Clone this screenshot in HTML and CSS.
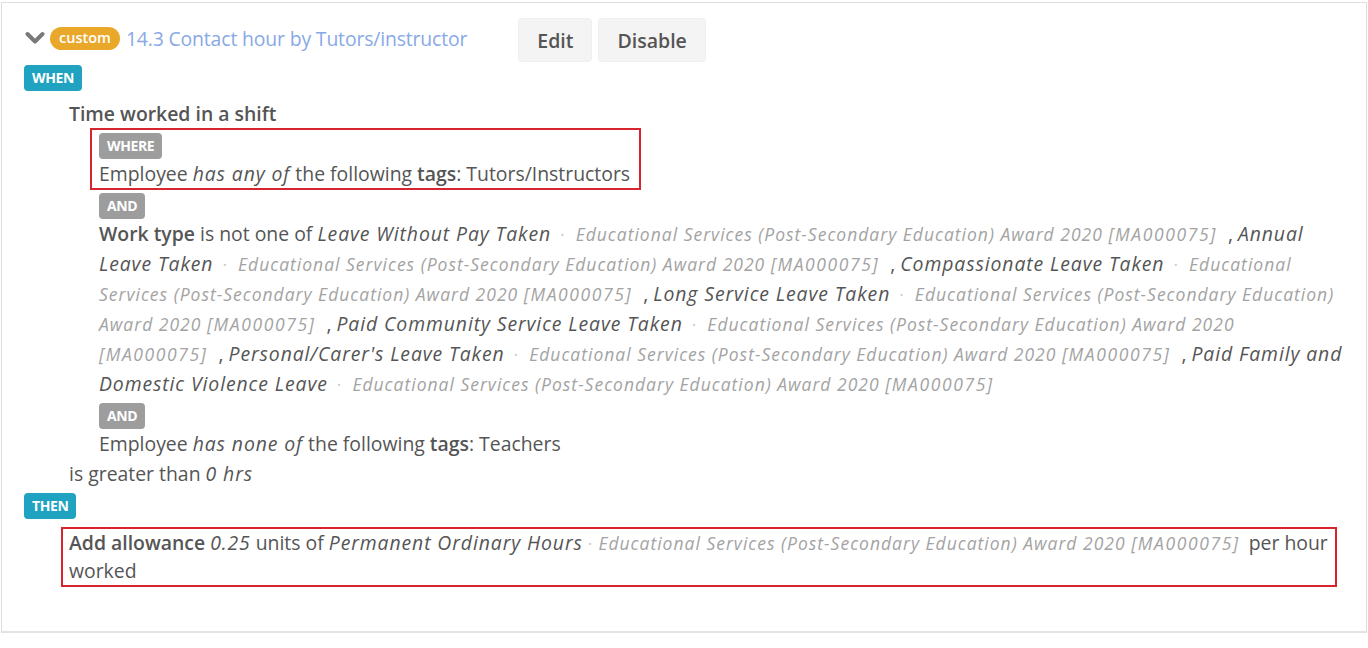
FILE: index.html
```html
<!DOCTYPE html>
<html>
<head>
<meta charset="utf-8">
<link rel="stylesheet" href="styles.css">
</head>
<body>
<div class="card">
  <div class="header">
    <div class="title-wrap">
      <svg class="chevron" width="20" height="14" viewBox="0 0 20 14"><path d="M2.5 3 L10 10.5 L17.5 3" fill="none" stroke="#7a7a7a" stroke-width="4" stroke-linecap="round" stroke-linejoin="round"/></svg>
      <span class="pill">custom</span>
      <span class="title">14.3 Contact hour by Tutors/instructor</span>
    </div>
    <div class="actions">
      <button class="btn">Edit</button>
      <button class="btn">Disable</button>
    </div>
  </div>

  <div class="section when">
    <span class="badge teal">WHEN</span>
    <div class="when-body">
      <div class="line strong">Time worked in a shift</div>
      <div class="conds">
        <div class="hl hl-where">
          <span class="badge gray first">WHERE</span>
          <div class="line">Employee <em>has any of</em> the following <b>tags</b>: Tutors/Instructors</div>
        </div>
        <span class="badge gray after-box">AND</span>
        <div class="line"><b>Work type</b> is not one of <em>Leave Without Pay Taken</em><span class="award"><span class="dot">·</span>Educational Services (Post-Secondary Education) Award 2020 <span class="code">[MA000075]</span></span>, <em>Annual Leave Taken</em><span class="award"><span class="dot">·</span>Educational Services (Post-Secondary Education) Award 2020 <span class="code">[MA000075]</span></span>, <em>Compassionate Leave Taken</em><span class="award"><span class="dot">·</span>Educational Services (Post-Secondary Education) Award 2020 <span class="code">[MA000075]</span></span>, <em>Long Service Leave Taken</em><span class="award"><span class="dot">·</span>Educational Services (Post-Secondary Education) Award 2020 <span class="code">[MA000075]</span></span>, <em>Paid Community Service Leave Taken</em><span class="award"><span class="dot">·</span>Educational Services (Post-Secondary Education) Award 2020 <span class="code">[MA000075]</span></span>, <em>Personal/Carer's Leave Taken</em><span class="award"><span class="dot">·</span>Educational Services (Post-Secondary Education) Award 2020 <span class="code">[MA000075]</span></span>, <em>Paid Family and Domestic Violence Leave</em><span class="award"><span class="dot">·</span>Educational Services (Post-Secondary Education) Award 2020 <span class="code">[MA000075]</span></span></div>
        <span class="badge gray">AND</span>
        <div class="line">Employee <em>has none of</em> the following <b>tags</b>: Teachers</div>
      </div>
      <div class="line">is greater than <em>0 hrs</em></div>
    </div>
  </div>

  <div class="section then">
    <span class="badge teal">THEN</span>
    <div class="then-body">
      <div class="hl hl-then">
        <div class="line tight"><b>Add allowance</b> <em>0.25</em> units of <em>Permanent Ordinary Hours</em><span class="award small"><span class="dot">·</span>Educational Services (Post-Secondary Education) Award 2020 <span class="code">[MA000075]</span></span> per hour worked</div>
      </div>
    </div>
  </div>
</div>
</body>
</html>
```

FILE: styles.css
```css
* { box-sizing: border-box; }
html, body { margin: 0; padding: 0; background: #fff; }
body {
  font-family: "Open Sans", "Lato", sans-serif;
  color: #555;
  font-size: 19.4px;
}
.card {
  margin: 2px 1px 0 1px;
  height: 631px;
  border: 1px solid #dedede;
  border-bottom: 2px solid #e3e3e3;
  padding: 15px 16px 0 22px;
}
.header {
  display: flex;
  align-items: center;
  height: 44px;
}
.title-wrap {
  display: flex;
  align-items: center;
  margin-top: -4px;
}
.chevron { margin-left: 1px; margin-right: 5px; }
.pill {
  background: #eaa82a;
  color: #fff;
  font-size: 14.5px;
  font-weight: 600;
  border-radius: 12px;
  height: 23px;
  line-height: 22px;
  padding: 0 9px;
}
.title {
  color: #87a9e6;
  font-size: 19.4px;
  margin-left: 6px;
  letter-spacing: -0.15px;
}
.actions {
  display: flex;
  gap: 6px;
  margin-left: 51px;
}
.btn {
  font-family: inherit;
  font-size: 19.5px;
  font-weight: 600;
  color: #555;
  background: #f4f4f4;
  border: 1px solid #efefef;
  border-radius: 4px;
  height: 44px;
  padding: 0 18px;
}
.section { display: flex; flex-direction: column; align-items: flex-start; }
.badge {
  display: inline-block;
  color: #fff;
  font-size: 14px;
  font-weight: 700;
  height: 26px;
  line-height: 26px;
  padding: 0 8px;
  border-radius: 4px;
  letter-spacing: -0.4px;
}
.teal { background: #1fa3c1; }
.gray { background: #9d9d9d; margin-top: 4px; }
.gray.first { margin-top: 0; }
.gray.after-box { margin-top: 3px; }
.when .teal { margin-top: 3px; margin-bottom: 8px; }
.then .teal { margin-top: 4px; }
.when-body { padding-left: 45px; align-self: stretch; }
.line { line-height: 30px; }
.line.tight { line-height: 28px; }
.strong { font-weight: 600; }
b { font-weight: 600; }
em { font-style: italic; letter-spacing: 0.9px; }
.conds { padding-left: 30px; display: flex; flex-direction: column; align-items: flex-start; }
.hl { border: 2px solid #d72530; }
.hl-where {
  margin-top: -1px;
  margin-left: -9px;
  padding: 3px 9px 0 7px;
  display: flex;
  flex-direction: column;
  align-items: flex-start;
}
.hl-where .line { line-height: 29px; }
.award {
  color: #a3a3a3;
  font-size: 17.5px;
  font-style: italic;
  letter-spacing: 1px;
  margin-right: 11px;
}
.code { letter-spacing: 1.6px; }
.dot { color: #cccccc; font-style: normal; margin: 0 11px 0 9px; letter-spacing: 0; }
.then-body { align-self: stretch; padding-left: 37px; padding-right: 13px; margin-top: 8px; }
.hl-then { padding: 0 4px 0 6px; }
.award.small { margin-right: 4px; }
.award.small .dot { margin: 0 6px 0 5px; }
```
